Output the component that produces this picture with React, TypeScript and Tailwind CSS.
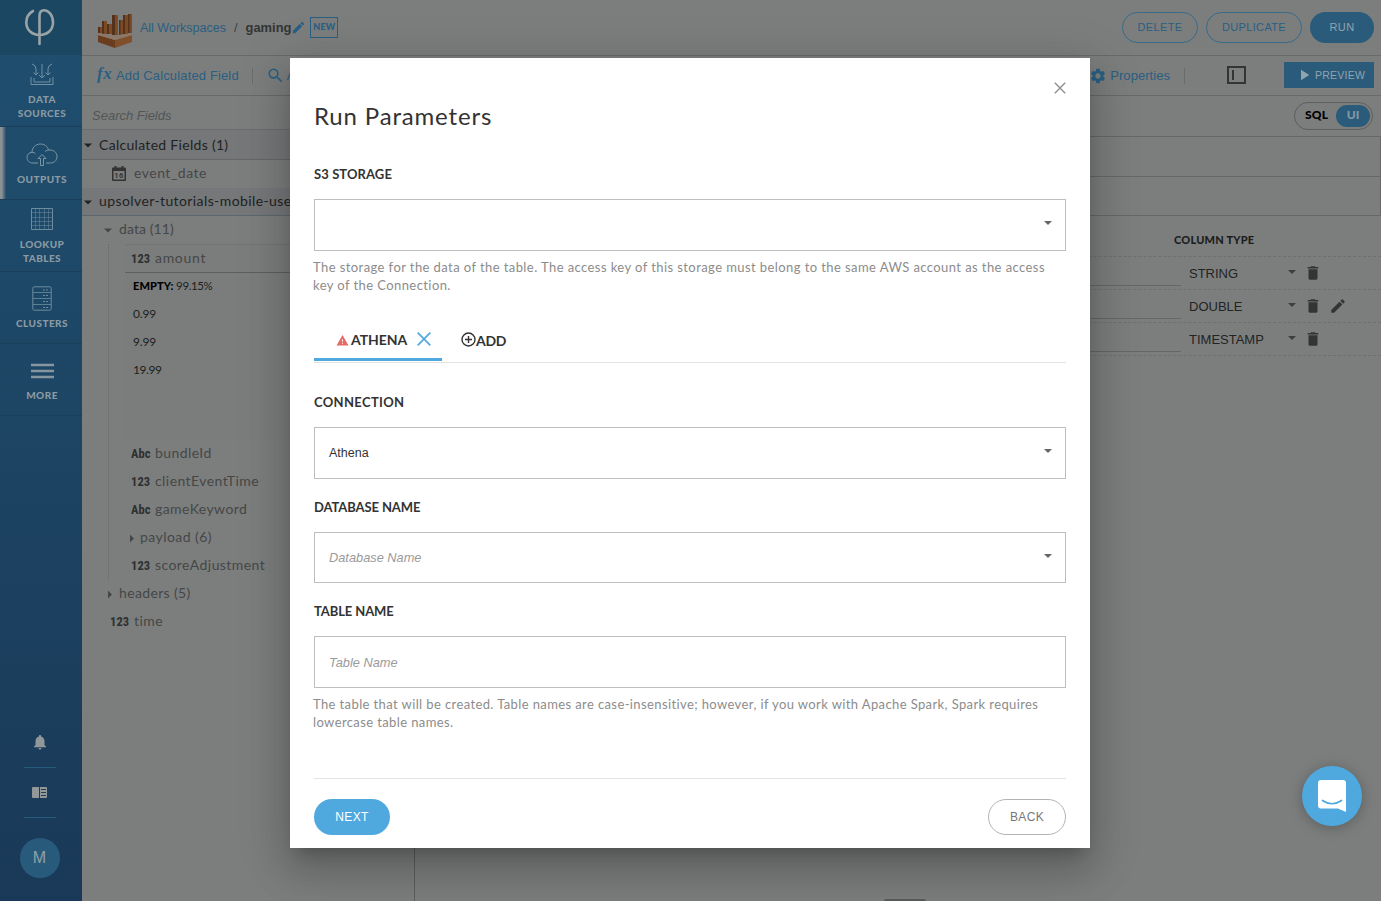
import type { ReactNode } from "react";
import { MdDelete, MdEdit, MdNotifications, MdPlayArrow, MdSearch, MdSettings, MdWarning } from "react-icons/md";

function Caret({ className }: { className: string }) {
  return (
    <svg viewBox="0 0 8 4" className={className} fill="currentColor">
      <path d="M0 0h8L4 4z" />
    </svg>
  );
}

function NavItem({ lines, icon, active, className }: { lines: string[]; icon: ReactNode; active?: boolean; className: string }) {
  return (
    <div
      className={`relative flex shrink-0 flex-col items-center border-b border-[#1a3f5b] text-[#8a9aa3] ${active ? "h-[73px] bg-[#204c6b]" : "h-[72px]"} ${className}`}
    >
      {active && <div className="absolute top-0 left-0 h-full w-[6px] bg-linear-to-r from-[#8c9194] from-30% to-[#204c6b]" />}
      <div className="flex h-[26px] items-center justify-center pl-[2px]">{icon}</div>
      <div className="mt-[5px] pl-[2px] text-center text-[10px] leading-[14px] font-black tracking-[0.45px]">
        {lines.map((l) => (
          <div key={l}>{l}</div>
        ))}
      </div>
    </div>
  );
}

function Sidebar() {
  return (
    <aside className="flex h-full w-[82px] shrink-0 flex-col bg-linear-to-b from-[#1f4f70] via-[#1d4463] via-50% to-[#1a3958]">
      <div className="flex h-[55px] shrink-0 justify-center bg-[#1c4763] pt-[8px] pr-[3px]">
        <svg width="32" height="39" viewBox="0 0 32 39" fill="none" stroke="#9aa3a6" strokeWidth="2.600" strokeLinecap="round">
          <path d="M9 3C4.500 5.500 2.300 9.500 2.300 14.500C2.300 22 8 27 15.500 27C23.500 27 29 22 29 14.500C29 7 24.500 2.200 20 2.200C17 2.200 15.500 4.500 15.500 8V36" />
        </svg>
      </div>
      <NavItem
        className="pt-[6px]"
        lines={["DATA", "SOURCES"]}
        icon={
          <svg width="24" height="24" viewBox="0 0 24 24" fill="none" stroke="#7391a3" strokeWidth="1">
            <path d="M12 2v14M9 13l3 3 3-3M2 2q4 1 4 5v6M3.500 10.500L6 13l2.500-2.500M22 2q-4 1-4 5v6M15.500 10.500L18 13l2.500-2.500M1 15v7.500h22V15M4 16v4h16v-4" />
          </svg>
        }
      />
      <NavItem
        active
        className="pt-[14px]"
        lines={["OUTPUTS"]}
        icon={
          <svg width="32" height="24" viewBox="0 0 32 24" className="translate-y-px" fill="none" stroke="#7b97a6" strokeWidth="1">
            <path d="M12 20H7C3 20 1 17.500 1 14.500c0-3 2-5 5-5.200C6 5 9 1 14.500 1c4 0 7 2.300 8 6 4.500-.5 8.500 2 8.500 6.500 0 4-3 6.500-6.500 6.500H20M6 9.300c1.500 0 2.700.5 3.500 1.500M22.500 7c-1.500.1-2.500.7-3.500 1.500M14.500 22.500v-7H12l4-4 4 4h-2.500v7z" />
          </svg>
        }
      />
      <NavItem
        className="pt-[6px]"
        lines={["LOOKUP", "TABLES"]}
        icon={
          <svg width="24" height="24" viewBox="0 0 24 24" fill="none" stroke="#6d8c9f" strokeWidth="1">
            <path d="M5.500 1.500v21M9.500 1.500v21M14.500 1.500v21M18.500 1.500v21M1.500 5.500h21M1.500 10.500h21M1.500 14.500h21M1.500 18.500h21" strokeOpacity=".5" />
            <path d="M1.500 1.500h21v21h-21z" />
          </svg>
        }
      />
      <NavItem
        className="pt-[13px]"
        lines={["CLUSTERS"]}
        icon={
          <svg width="20" height="25" viewBox="0 0 20 25" fill="none" stroke="#6d8c9f" strokeWidth="1">
            <rect x=".8" y=".8" width="18.400" height="23.400" rx="1.500" />
            <path d="M1 6.500h18M1 12.500h18M1 18.500h18" strokeOpacity=".8" />
            <path d="M11 4h2m1 0h2M11 9.500h2m1 0h2M11 15.500h2m1 0h2M11 21.500h2m1 0h2" />
          </svg>
        }
      />
      <NavItem
        className="pt-[13px]"
        lines={["MORE"]}
        icon={
          <svg width="23" height="16" viewBox="0 0 23 16" className="translate-y-px" stroke="#8797a2" strokeWidth="2.400">
            <path d="M0 2h23M0 8h23M0 14h23" />
          </svg>
        }
      />
      <div className="mt-auto flex flex-col items-center pr-[3px] pb-[23px]">
        <MdNotifications className="size-[18px] text-[#92979a]" />
        <div className="mt-[16px] h-px w-[32px] bg-[#285a7c]" />
        <svg width="15" height="11" viewBox="0 0 15 11" className="mt-[19px]">
          <path d="M1 0h6v11H1a1 1 0 0 1-1-1V1a1 1 0 0 1 1-1zM8 0h6a1 1 0 0 1 1 1v9a1 1 0 0 1-1 1H8z" fill="#92979a" />
          <path d="M9 2.500h5M9 5.500h5M9 8.500h5" stroke="#1c4160" strokeWidth="1" />
        </svg>
        <div className="mt-[19px] h-px w-[32px] bg-[#285a7c]" />
        <div className="mt-[20px] flex size-[40px] items-center justify-center rounded-full bg-[#285b7b] font-['Liberation_Sans',sans-serif] text-[16px] text-[#8fa0aa]">
          M
        </div>
      </div>
    </aside>
  );
}

function ServiceLogo() {
  return (
    <svg width="34" height="34" viewBox="0 0 34 34">
      <path d="M0 13h4v6H0zM4 7h5v13H4zM9 10h5v10H9zM14 1h6v20h-6zM21 6h4v15h-4zM25 1h5v19h-5zM30 0h4v19h-4z" fill="#7b4a26" />
      <path d="M0 13h2v6H0zM4 7h2v13H4zM9 10h2v10H9zM14 1h3v20h-3zM21 6h1.500v15H21zM25 1h2v19h-2zM30 0h1.500v19H30z" fill="#54311b" />
      <path d="M0 21l17 5v8L0 28z" fill="#6a3d1f" />
      <path d="M17 26l17-5v7l-17 6z" fill="#80502c" />
      <path d="M0 19l17 2.500L34 19v2l-17 5-17-5z" fill="#8a7868" />
    </svg>
  );
}

function CalendarIcon() {
  return (
    <svg width="14" height="15" viewBox="0 0 14 15">
      <path d="M1 1.500h1.500V0h2v1.500h5V0h2v1.500H13a1 1 0 0 1 1 1V14a1 1 0 0 1-1 1H1a1 1 0 0 1-1-1V2.500a1 1 0 0 1 1-1zM1.500 5v8.500h11V5z" fill="#333" fillRule="evenodd" />
      <text x="7" y="12" fontSize="7.500" fontWeight="700" textAnchor="middle" fill="#333" fontFamily="Roboto, sans-serif">
        16
      </text>
    </svg>
  );
}

function Kind({ children }: { children: string }) {
  return (
    <span className="w-[24px] shrink-0 pt-[3px] font-['Roboto',sans-serif] text-[12.500px] font-bold tracking-[0.1px] text-[#2e3030] [font-stretch:condensed]">
      {children}
    </span>
  );
}

function Leaf({ kind, name, className }: { kind: string; name: string; className: string }) {
  return (
    <div className={`flex h-[28px] items-center pb-[3px] text-[14px] tracking-[0.43px] text-[#454747] ${className}`}>
      <Kind>{kind}</Kind>
      {name}
    </div>
  );
}

function FieldTree() {
  return (
    <div className="flex w-[333px] shrink-0 flex-col border-r border-[#5c5e5e]">
      <div className="flex h-[34px] shrink-0 items-center border-b border-[#6b6d6e] pt-[6px] pl-[10px] font-['Liberation_Sans',sans-serif] text-[13px] text-[#535555] italic">
        Search Fields
      </div>
      <div className="flex h-[30px] shrink-0 items-center border-b border-[#62676a] bg-[#757779] pl-[2px] text-[14px] tracking-[0.3px] text-[#212323]">
        <Caret className="mr-[7px] h-[5px] w-[8px] translate-y-px" />
        Calculated Fields (1)
      </div>
      <div className="flex h-[28px] shrink-0 items-center pb-[3px] pl-[30px] text-[14px] tracking-[0.5px] text-[#454747]">
        <span className="pt-[2px]">
          <CalendarIcon />
        </span>
        <span className="ml-[8px]">event_date</span>
      </div>
      <div className="flex h-[28px] shrink-0 items-center overflow-hidden border-b border-[#5e676d] bg-[#757779] pb-[2px] pl-[2px] text-[14px] tracking-[0.4px] whitespace-nowrap text-[#212323]">
        <Caret className="mr-[7px] h-[5px] w-[8px] shrink-0 translate-y-[2px]" />
        upsolver-tutorials-mobile-users
      </div>
      <div className="flex h-[28px] shrink-0 items-center pb-[3px] pl-[22px] text-[14px] tracking-[0.1px] text-[#454747]">
        <Caret className="mr-[7px] h-[5px] w-[8px] translate-y-[2px]" />
        data (11)
      </div>
      <div className="ml-[26px] border-l border-dotted border-[#686a6a]">
        <div className="ml-[16px] h-[196px] bg-[#7b7d7c]">
          <div className="flex h-[29px] items-center border-t border-b border-t-[#727474] border-b-[#5d5f5f] pb-[2px] pl-[6px] text-[14px] tracking-[0.7px] text-[#454747]">
            <Kind>123</Kind>
            amount
          </div>
          <div className="-mt-px pl-[8px] text-[12px] leading-[28px] text-[#1c1d1d]">
            <div className="h-[28px] text-[11.500px] tracking-[-0.4px]">
              <b className="text-[11px] font-black tracking-[0.1px] text-black">EMPTY:</b> 99.15%
            </div>
            <div className="h-[28px] tracking-[-0.2px]">0.99</div>
            <div className="h-[28px] tracking-[-0.2px]">9.99</div>
            <div className="h-[28px] tracking-[-0.4px]">19.99</div>
          </div>
        </div>
        <Leaf className="pl-[22px]" kind="Abc" name="bundleId" />
        <Leaf className="pl-[22px]" kind="123" name="clientEventTime" />
        <Leaf className="pl-[22px]" kind="Abc" name="gameKeyword" />
        <div className="flex h-[28px] items-center pb-[3px] pl-[20px] text-[14px] tracking-[0.45px] text-[#454747]">
          <Caret className="mr-[4px] -ml-px h-[5px] w-[8px] translate-y-[2px] -rotate-90" />
          payload (6)
        </div>
        <Leaf className="pl-[22px]" kind="123" name="scoreAdjustment" />
      </div>
      <div className="flex h-[28px] items-center pb-[3px] pl-[24px] text-[14px] tracking-[0.35px] text-[#454747]">
        <Caret className="mr-[5px] h-[5px] w-[8px] translate-y-[2px] -rotate-90" />
        headers (5)
      </div>
      <Leaf className="pl-[28px]" kind="123" name="time" />
    </div>
  );
}

function ColumnRow({ type, editable }: { type: string; editable?: boolean }) {
  return (
    <div className="flex h-[33px] items-center border-b border-dashed border-[#6e7070]">
      <div className="mt-[24px] h-px w-[766px] shrink-0 bg-[#656767]" />
      <div className="w-[107px] shrink-0 pt-[2px] pl-[8px] text-[13px] text-[#222424]">{type}</div>
      <Caret className="mr-[8px] h-[4px] w-[8px] -translate-y-px text-[#3d3f3f]" />
      <MdDelete className="size-[18px] text-[#333535]" />
      {editable && <MdEdit className="ml-[7px] size-[18px] text-[#333535]" />}
    </div>
  );
}

function Workspace() {
  return (
    <div className="flex h-full min-w-0 flex-1 flex-col bg-[#7c7e7d] font-['Liberation_Sans',sans-serif]">
      <header className="flex h-[56px] shrink-0 items-center border-b border-[#686a6a] pr-[7px] pl-[16px] text-[13px]">
        <div className="pt-[6px]">
          <ServiceLogo />
        </div>
        <span className="ml-[8px] pt-px text-[12.500px] text-[#2a5f82]">All Workspaces</span>
        <span className="mx-[8px] text-[#3c3e3e]">/</span>
        <b className="text-[12.900px] text-[#333535]">gaming</b>
        <MdEdit className="size-[15px] text-[#2a5f82]" />
        <span className="ml-[4px] flex h-[21px] w-[28px] items-center justify-center border border-[#2a5f82] pb-px font-['Lato',sans-serif] text-[9px] font-black tracking-[0.2px] text-[#2a5f82]">
          NEW
        </span>
        <div className="ml-auto flex gap-[8px] text-[11px] tracking-[0.35px] text-[#2a5f82]">
          <button className="h-[31px] w-[76px] rounded-full border border-[#376a89]">DELETE</button>
          <button className="h-[31px] w-[96px] rounded-full border border-[#376a89]">DUPLICATE</button>
          <button className="h-[31px] w-[64px] rounded-full bg-[#2a5b7b] text-[#91a3ae]">RUN</button>
        </div>
      </header>
      <div className="flex h-[40px] shrink-0 items-center border-b border-[#686a6a] pr-[7px] pl-[15px] text-[13px] text-[#2a5f82]">
        <span className="w-[15px] pb-[3px] font-['Liberation_Serif',serif] text-[17px] font-bold tracking-[0.5px] italic">fx</span>
        <span className="ml-[4px] tracking-[0.14px]">Add Calculated Field</span>
        <span className="ml-[13px] h-[16px] w-px bg-[#6a6c6c]" />
        <MdSearch className="ml-[13px] size-[19px]" />
        <span className="ml-[2px]">A</span>
        <div className="ml-auto flex items-center">
          <MdSettings className="size-[18px]" />
          <span className="ml-[3px] tracking-[0.05px]">Properties</span>
          <span className="mr-[42px] ml-[14px] h-[16px] w-px bg-[#6a6c6c]" />
          <span className="mb-[2px] flex h-[18px] w-[19px] items-center border-2 border-[#333535] pl-[3px]">
            <span className="h-[10px] w-[2px] bg-[#333535]" />
          </span>
          <button className="mb-px ml-[38px] flex h-[26px] w-[90px] items-center bg-[#2a5b7b] pl-[11px] text-[10.500px] tracking-[0.25px] text-[#91a3ae]">
            <MdPlayArrow className="mr-[2px] size-[18px]" />
            <span className="pt-px">PREVIEW</span>
          </button>
        </div>
      </div>
      <div className="flex min-h-0 flex-1">
        <div className="flex font-['Lato',sans-serif]">
          <FieldTree />
        </div>
        <main className="flex min-w-0 flex-1 flex-col">
          <div className="flex h-[41px] shrink-0 items-center justify-end border-b border-[#666868] pr-[8px]">
            <div className="flex h-[28px] w-[79px] items-center rounded-full border border-[#5d5f5f] pl-[10px] font-['Lato',sans-serif] text-[12px] font-black text-black">
              <span className="pb-[2px] tracking-[0.2px]">SQL</span>
              <span className="mr-[2px] ml-auto flex h-[22px] w-[34px] items-center justify-center rounded-full bg-[#2a5b7b] pb-[2px] text-[#8299a6]">UI</span>
            </div>
          </div>
          <div className="h-[40px] shrink-0 border-r border-b border-[#666868]" />
          <div className="h-[39px] shrink-0 border-r border-b border-[#666868]" />
          <div className="flex h-[41px] shrink-0 items-center border-b border-dashed border-[#6e7070] pt-[8px] pl-[759px] font-['Lato',sans-serif] text-[11px] font-black tracking-[0.2px] text-[#1c1d1d]">
            COLUMN TYPE
          </div>
          <ColumnRow type="STRING" />
          <ColumnRow type="DOUBLE" editable />
          <ColumnRow type="TIMESTAMP" />
          <div className="mt-auto ml-[469px] h-[2px] w-[42px] rounded-t-sm bg-[#595b5b]" />
        </main>
      </div>
    </div>
  );
}

function Label({ children, className = "tracking-[0.35px]" }: { children: string; className?: string }) {
  return <div className={`h-[20px] text-[13px] leading-[18px] font-bold text-[#333] ${className}`}>{children}</div>;
}

function Field({ value, placeholder, select, className }: { value?: string; placeholder?: string; select?: boolean; className: string }) {
  return (
    <div className={`mt-[14px] flex items-center border border-[#bebebe] px-[14px] font-['Liberation_Sans',sans-serif] text-[13px] ${className}`}>
      {value && <span className="text-[12.500px] text-[#333]">{value}</span>}
      {placeholder && <span className="text-[12.800px] text-[#9b9b9b] italic">{placeholder}</span>}
      {select && <Caret className="-mr-px mb-[4px] ml-auto h-[4px] w-[8px] text-[#666]" />}
    </div>
  );
}

function RunDialog() {
  return (
    <div className="absolute top-[58px] left-[290px] h-[790px] w-[800px] bg-white px-[24px] shadow-[0_9px_46px_8px_rgba(0,0,0,0.12),0_11px_15px_-7px_rgba(0,0,0,0.2),0_24px_38px_3px_rgba(0,0,0,0.14)]">
      <div className="flex h-[107px] items-start justify-between">
        <h1 className="mt-[43px] text-[24px] leading-[30px] tracking-[0.83px] text-[#333]">Run Parameters</h1>
        <svg width="12" height="12" viewBox="0 0 12 12" className="mt-[24px]" stroke="#8f8f8f" strokeWidth="1.400">
          <path d="M.8.8l10.400 10.400M11.200.8L.8 11.200" />
        </svg>
      </div>
      <Label className="tracking-[0.1px]">S3 STORAGE</Label>
      <Field select className="h-[52px]" />
      <p className="mt-[7px] -ml-px pb-px text-[13px] leading-[18px] tracking-[0.42px] text-[#8c8c8c]">
        The storage for the data of the table. The access key of this storage must belong to the same AWS account as the access
        <br />
        key of the Connection.
      </p>
      <div className="mt-[23px] flex h-[45px] border-b border-[#e3e3e3] text-[14px] font-bold text-[#333]">
        <div className="flex h-[43px] w-[128px] items-center border-b-[3px] border-[#4fa9df] pt-[4px] pl-[22px]">
          <MdWarning className="mr-[2px] size-[13px] text-[#e66a66]" />
          <span className="pb-[2px] tracking-[-0.05px]">ATHENA</span>
          <svg width="14" height="14" viewBox="0 0 14 14" className="mb-[3px] ml-[10px]" stroke="#4fa9df" strokeWidth="1.700">
            <path d="M.7.700l12.600 12.600M13.300.7L.7 13.300" />
          </svg>
        </div>
        <div className="flex h-[43px] items-center pt-[3px] pl-[19px]">
          <svg width="15" height="15" viewBox="0 0 15 15" className="mb-[3px]" fill="none" stroke="#333" strokeWidth="1.400">
            <circle cx="7.500" cy="7.500" r="6.500" />
            <path d="M7.500 4v7M4 7.500h7" />
          </svg>
          <span className="pb-[1px] tracking-[-0.3px]">ADD</span>
        </div>
      </div>
      <div className="h-[30px]" />
      <Label>CONNECTION</Label>
      <Field value="Athena" select className="h-[52px]" />
      <div className="h-[19px]" />
      <Label className="-tracking-[0.1px]">DATABASE NAME</Label>
      <Field placeholder="Database Name" select className="h-[51px]" />
      <div className="h-[19px]" />
      <Label className="-tracking-[0.1px]">TABLE NAME</Label>
      <Field placeholder="Table Name" className="h-[52px] pt-[2px]" />
      <p className="mt-[7px] -ml-px pb-px text-[13px] leading-[18px] tracking-[0.39px] text-[#8c8c8c]">
        The table that will be created. Table names are case-insensitive; however, if you work with Apache Spark, Spark requires
        <br />
        lowercase table names.
      </p>
      <div className="mt-[46px] flex justify-between border-t border-[#e3e3e3] pt-[20px] font-['Liberation_Sans',sans-serif] text-[12px] tracking-[0.35px]">
        <button className="h-[36px] w-[76px] rounded-full bg-[#4fa9df] text-white">NEXT</button>
        <button className="h-[36px] w-[78px] rounded-full border border-[#b3b3b3] text-[#777]">BACK</button>
      </div>
    </div>
  );
}

export default function App() {
  return (
    <div className="relative flex h-[901px] w-[1381px] overflow-hidden bg-[#7c7e7d] font-['Lato',sans-serif]">
      <Sidebar />
      <Workspace />
      <RunDialog />
      <button className="absolute top-[766px] left-[1302px] flex size-[60px] items-center justify-center rounded-full bg-[#4fa9df] shadow-[0_2px_14px_rgba(0,0,0,0.25)]">
        <svg width="28" height="32" viewBox="0 0 28 32">
          <path d="M3 0h22a3 3 0 0 1 3 3v29l-8-3.500H3a3 3 0 0 1-3-3V3a3 3 0 0 1 3-3z" fill="#fff" />
          <path d="M4.500 20.500q9.500 6.500 19 0" fill="none" stroke="#4fa9df" strokeWidth="1.700" strokeLinecap="round" />
        </svg>
      </button>
    </div>
  );
}
